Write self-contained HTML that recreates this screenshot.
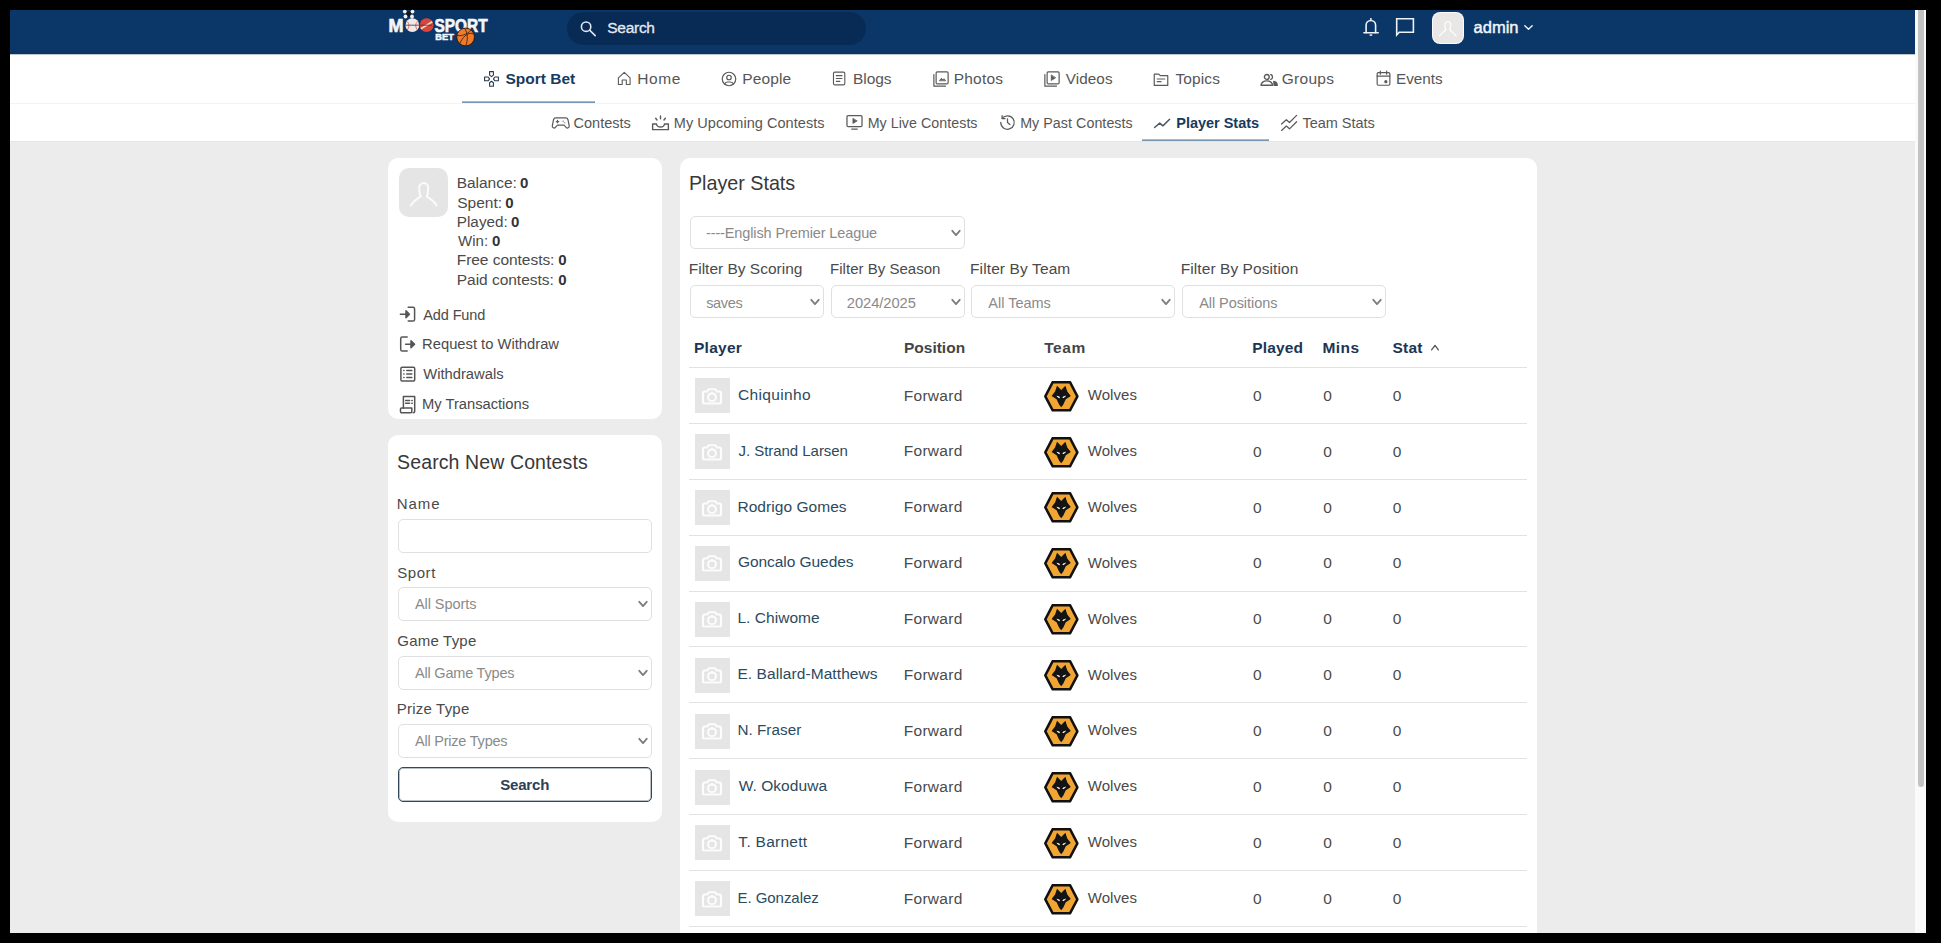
<!DOCTYPE html>
<html><head><meta charset="utf-8"><title>Player Stats</title><style>
html,body{margin:0;padding:0;background:#000;width:1941px;height:943px;overflow:hidden}
body{position:relative;font-family:"Liberation Sans",sans-serif}
.t{position:absolute;white-space:nowrap;line-height:0;font-family:"Liberation Sans",sans-serif}
svg{display:block}
</style></head><body>
<div style="position:absolute;left:10px;top:10px;width:1905px;height:923px;background:#ececec"></div>
<div style="position:absolute;left:1915px;top:10px;width:11px;height:923px;background:#fafafa"></div>
<div style="position:absolute;left:1918px;top:10px;width:6px;height:777px;background:#c3c3c3;border-radius:0 0 3px 3px"></div>
<div style="position:absolute;left:10px;top:10px;width:1905px;height:44px;background:#0b3768"></div>
<div style="position:absolute;left:10px;top:52px;width:1905px;height:1px;background:#0d3360"></div>
<div style="position:absolute;left:10px;top:53px;width:1905px;height:1px;background:#17324f"></div>
<div style="position:absolute;left:567px;top:12px;width:299px;height:33px;background:#082b56;border-radius:17px"></div>
<svg style="position:absolute;left:575px;top:15px" width="30" height="25" viewBox="0 0 30 25" fill="none" stroke="#dde6f0" stroke-width="1.6" stroke-linecap="round"><circle cx="11.1" cy="11.7" r="4.7"/><path d="M14.6 15.2L20.2 20.6"/></svg>
<div class="t" style="left:607.29px;top:28px;font-size:15.5px;color:#e4eaf0;letter-spacing:-0.28px;-webkit-text-stroke:0.3px #e4eaf0;">Search</div>
<svg style="position:absolute;left:1358px;top:14px" width="62" height="26" viewBox="0 0 62 26" fill="none" stroke="#eef2f7" stroke-width="1.6" stroke-linecap="round" stroke-linejoin="round">
<circle cx="12.9" cy="4.9" r="1" fill="#eef2f7" stroke="none"/><path d="M8.1 18.6V11.2a4.75 4.75 0 0 1 9.5 0V18.6"/><path d="M5.9 18.8H20.2"/><rect x="11.6" y="20.3" width="2.6" height="1.5" fill="#eef2f7" stroke="none"/>
<path d="M38.7 4.8H55.4V18.2H41.2L38.7 21V4.8Z" stroke-linecap="butt" stroke-linejoin="miter"/></svg>
<div style="position:absolute;left:1432px;top:12px;width:32px;height:32px;background:#fbfbfb;border-radius:8px"></div>
<div style="position:absolute;left:1433px;top:13px;width:30px;height:30px;background:#e8e7e5;border-radius:7px"></div>
<svg style="position:absolute;left:1432px;top:12px" width="32" height="32" viewBox="0 0 50 50" fill="none" stroke="#fbfbfb" stroke-width="2.2" stroke-linecap="round" stroke-linejoin="round"><path d="M21.7 28.4C20.7 26.6 20.2 24.6 20.2 19.6A4.5 4.5 0 0 1 29.2 19.6C29.2 24.6 28.7 26.6 27.7 28.4C31.2 30.6 34.8 33 37.6 37.4M21.7 28.4C18.2 30.6 14.6 33 11.8 37.4"/></svg>
<div class="t" style="left:1473.61px;top:27px;font-size:16.5px;color:#f2f5f8;letter-spacing:-0.024px;-webkit-text-stroke:0.45px #f2f5f8;">admin</div>
<svg style="position:absolute;left:1523px;top:22px" width="11" height="11" viewBox="0 0 12 12" fill="none" stroke="#f2f5f8" stroke-width="1.5" stroke-linecap="round" stroke-linejoin="round"><path d="M2 4l4 4l4 -4"/></svg>
<div style="position:absolute;left:10px;top:54px;width:1905px;height:87px;background:#fff"></div>
<div style="position:absolute;left:10px;top:54px;width:1905px;height:1px;background:#bcc6cf"></div>
<div style="position:absolute;left:10px;top:103px;width:1905px;height:1px;background:#f3f3f3"></div>
<div style="position:absolute;left:10px;top:141px;width:1905px;height:1px;background:#e5e5e5"></div>
<div style="position:absolute;left:462px;top:101px;width:133px;height:1px;background:#a6bacb"></div>
<div style="position:absolute;left:462px;top:102px;width:133px;height:1px;background:#7896b0"></div>
<div style="position:absolute;left:1142px;top:139px;width:127px;height:1px;background:#a6bacb"></div>
<div style="position:absolute;left:1142px;top:140px;width:127px;height:1px;background:#7896b0"></div>
<div class="t" style="left:505.54px;top:79px;font-size:15.5px;color:#173a60;font-weight:bold;">Sport Bet</div>
<div class="t" style="left:637.23px;top:79px;font-size:15.5px;color:#565656;letter-spacing:0.566px;">Home</div>
<div class="t" style="left:742.23px;top:79px;font-size:15.5px;color:#565656;letter-spacing:0.117px;">People</div>
<div class="t" style="left:853.03px;top:79px;font-size:15.5px;color:#565656;letter-spacing:-0.063px;">Blogs</div>
<div class="t" style="left:953.63px;top:79px;font-size:15.5px;color:#565656;letter-spacing:0.232px;">Photos</div>
<div class="t" style="left:1065.84px;top:79px;font-size:15.25px;color:#565656;letter-spacing:0.07px;">Videos</div>
<div class="t" style="left:1175.46px;top:79px;font-size:15.5px;color:#565656;letter-spacing:0.114px;">Topics</div>
<div class="t" style="left:1281.72px;top:79px;font-size:15.5px;color:#565656;letter-spacing:0.299px;">Groups</div>
<div class="t" style="left:1396.05px;top:79px;font-size:15.25px;color:#565656;letter-spacing:-0.027px;">Events</div>
<svg style="position:absolute;left:484px;top:71px" width="16" height="16" viewBox="0 0 16 16" fill="none" stroke="#26394d" stroke-width="1.1" stroke-linejoin="round"><path d="M5.6 0.6h3.8v3.5l-1.9 1.5l-1.9-1.5z"/><path d="M5.6 15.2h3.8v-3.5l-1.9-1.5l-1.9 1.5z"/><path d="M0.6 6v3.8h3.5l1.5-1.9l-1.5-1.9z"/><path d="M14.4 6v3.8h-3.5l-1.5-1.9l1.5-1.9z"/></svg>
<svg style="position:absolute;left:616px;top:69.5px" width="16.5" height="16.5" viewBox="0 0 24 24" fill="none" stroke="#5a5a5a" stroke-width="1.6" stroke-linecap="round" stroke-linejoin="round"><path d="M3.5 11.5L12 3.5l8.5 8v9.5h-5.5v-6.5h-6v6.5H3.5z"/></svg>
<svg style="position:absolute;left:720px;top:70px" width="18" height="18" viewBox="0 0 24 24" fill="none" stroke="#5a5a5a" stroke-width="1.6" stroke-linecap="round" stroke-linejoin="round"><circle cx="12" cy="12" r="9"/><circle cx="12" cy="10" r="3"/><path d="M6.168 18.849a4 4 0 0 1 3.832 -2.849h4a4 4 0 0 1 3.834 2.855"/></svg>
<svg style="position:absolute;left:831px;top:70px" width="17" height="17" viewBox="0 0 24 24" fill="none" stroke="#5a5a5a" stroke-width="1.6" stroke-linecap="round" stroke-linejoin="round"><rect x="3.5" y="3" width="16" height="18" rx="2"/><path d="M7.5 8h8M7.5 12h8M7.5 16h5"/></svg>
<svg style="position:absolute;left:931.7px;top:69.5px" width="18" height="18" viewBox="0 0 24 24" fill="none" stroke="#5a5a5a" stroke-width="1.6" stroke-linecap="round" stroke-linejoin="round"><rect x="5.5" y="2.5" width="16" height="16" rx="1.5"/><path d="M2.5 6v15.5h15.5"/><path d="M10 14l2.5-3l2 2l1.5-1.5l2 2.5z" fill="#5a5a5a" stroke-width="1"/></svg>
<svg style="position:absolute;left:1042.7px;top:69.5px" width="18" height="18" viewBox="0 0 24 24" fill="none" stroke="#5a5a5a" stroke-width="1.6" stroke-linecap="round" stroke-linejoin="round"><rect x="5.5" y="2.5" width="16" height="16" rx="1.5"/><path d="M2.5 6v15.5h15.5"/><path d="M11 7v7l5.5-3.5z" fill="#5a5a5a" stroke-width="1"/></svg>
<svg style="position:absolute;left:1151.5px;top:69.5px" width="18" height="18" viewBox="0 0 24 24" fill="none" stroke="#5a5a5a" stroke-width="1.6" stroke-linecap="round" stroke-linejoin="round"><path d="M3 5.5h6l2 2h10v13H3z"/><path d="M7 12h10M7 15.5h5"/></svg>
<svg style="position:absolute;left:1259.5px;top:72.5px" width="18" height="14" viewBox="0 0 18 14" fill="none" stroke="#5a5a5a" stroke-width="1.35" stroke-linecap="round" stroke-linejoin="round"><circle cx="6.8" cy="3.9" r="2.4"/><path d="M1 12.2a5.8 4.4 0 0 1 11.6 0z"/><path d="M10.8 1.5a2.6 2.6 0 0 1 0 4.9"/><path d="M13.8 8.4a4 4 0 0 1 3.4 3.6v0.4h-3z" fill="#5a5a5a"/></svg>
<svg style="position:absolute;left:1373.5px;top:69px" width="19" height="19" viewBox="0 0 24 24" fill="none" stroke="#5a5a5a" stroke-width="1.5" stroke-linecap="round" stroke-linejoin="round"><rect x="4" y="4.5" width="16" height="16" rx="1.5"/><path d="M8 2.5v4M16 2.5v4M4 9h16"/><circle cx="15" cy="16" r="1.3" fill="#5a5a5a"/></svg>
<div class="t" style="left:573.57px;top:123px;font-size:14.5px;color:#565656;">Contests</div>
<div class="t" style="left:673.81px;top:123px;font-size:14.5px;color:#565656;letter-spacing:0.044px;">My Upcoming Contests</div>
<div class="t" style="left:867.63px;top:123px;font-size:14.25px;color:#565656;letter-spacing:0.039px;">My Live Contests</div>
<div class="t" style="left:1020.13px;top:123px;font-size:14.25px;color:#565656;letter-spacing:0.061px;">My Past Contests</div>
<div class="t" style="left:1176.34px;top:123px;font-size:14.5px;color:#173a60;font-weight:bold;letter-spacing:-0.026px;">Player Stats</div>
<div class="t" style="left:1302.48px;top:123px;font-size:14.5px;color:#565656;letter-spacing:-0.021px;">Team Stats</div>
<svg style="position:absolute;left:551px;top:112.5px" width="19.5" height="19.5" viewBox="0 0 24 24" fill="none" stroke="#5a5a5a" stroke-width="1.5" stroke-linecap="round" stroke-linejoin="round"><path d="M12 5h3.5a5 5 0 0 1 0 10h-5.5l-4.015 4.227a2.3 2.3 0 0 1 -3.923 -2.035l1.634 -6.542a5 5 0 0 1 4.804 -5.65h3.5z" style="display:none"/><path d="M6 6h12a3 3 0 0 1 2.9 2.3l1.5 7.5a2.2 2.2 0 0 1-3.8 1.9L16 15H8l-2.6 2.7a2.2 2.2 0 0 1-3.8-1.9l1.5-7.5A3 3 0 0 1 6 6z"/><path d="M6.5 10.5h3M8 9v3M15 10h.01M17 12h.01"/></svg>
<svg style="position:absolute;left:650px;top:113px" width="21" height="21" viewBox="0 0 24 24" fill="none" stroke="#5a5a5a" stroke-width="1.6" stroke-linecap="round" stroke-linejoin="round"><path d="M3 12.5h4.5a4.5 3.5 0 0 0 9 0H21v6.5H3z"/><path d="M12 3.5v3M6.5 6l1.5 2M17.5 6l-1.5 2"/></svg>
<svg style="position:absolute;left:845px;top:112px" width="19" height="19" viewBox="0 0 24 24" fill="none" stroke="#5a5a5a" stroke-width="1.6" stroke-linecap="round" stroke-linejoin="round"><rect x="2.5" y="4.5" width="19" height="14" rx="1.5"/><path d="M8.5 21.5h7"/><path d="M10 8.5v6l5-3z" fill="#5a5a5a" stroke-width="1"/></svg>
<svg style="position:absolute;left:998px;top:113px" width="19" height="19" viewBox="0 0 24 24" fill="none" stroke="#5a5a5a" stroke-width="1.6" stroke-linecap="round" stroke-linejoin="round"><path d="M12 7.5v4.5l3 2.5"/><path d="M5.3 6.8A8.5 8.5 0 1 1 3.5 12"/><path d="M5.2 3.2v3.8h3.8"/></svg>
<svg style="position:absolute;left:1153px;top:114px" width="19" height="19" viewBox="0 0 24 24" fill="none" stroke="#4b5563" stroke-width="1.8" stroke-linecap="round" stroke-linejoin="round"><path d="M2 17l6.5-5.5l4 3.5L21 6.5"/></svg>
<svg style="position:absolute;left:1280px;top:113px" width="19" height="19" viewBox="0 0 24 24" fill="none" stroke="#5a5a5a" stroke-width="1.6" stroke-linecap="round" stroke-linejoin="round"><path d="M2 14l6-5.5l4 3.5L21 3"/><path d="M2 22l6-5.5l4 3.5L21 11"/></svg>
<div style="position:absolute;left:388px;top:157.5px;width:274px;height:261.5px;background:#fff;border-radius:10px"></div>
<div style="position:absolute;left:398.5px;top:167.5px;width:49.5px;height:49.5px;background:#e5e5e5;border-radius:10px"></div>
<svg style="position:absolute;left:398.5px;top:167.5px" width="50" height="50" viewBox="0 0 50 50" fill="none" stroke="#fbfbfb" stroke-width="2" stroke-linecap="round" stroke-linejoin="round"><path d="M21.7 28.4C20.7 26.6 20.2 24.6 20.2 19.6A4.5 4.5 0 0 1 29.2 19.6C29.2 24.6 28.7 26.6 27.7 28.4C31.2 30.6 34.8 33 37.6 37.4M21.7 28.4C18.2 30.6 14.6 33 11.8 37.4"/></svg>
<div class="t" style="left:456.73px;top:183px;font-size:15.5px;color:#4a4a4a;letter-spacing:-0.033px;">Balance:</div>
<div class="t" style="left:520.00px;top:183px;font-size:15px;color:#333;font-weight:bold;">0</div>
<div class="t" style="left:457.29px;top:203px;font-size:15.5px;color:#4a4a4a;">Spent:</div>
<div class="t" style="left:505.20px;top:203px;font-size:15px;color:#333;font-weight:bold;">0</div>
<div class="t" style="left:456.75px;top:222px;font-size:15.25px;color:#4a4a4a;letter-spacing:0.03px;">Played:</div>
<div class="t" style="left:510.90px;top:222px;font-size:15px;color:#333;font-weight:bold;">0</div>
<div class="t" style="left:457.94px;top:241px;font-size:15.0px;color:#4a4a4a;letter-spacing:0.047px;">Win:</div>
<div class="t" style="left:492.00px;top:241px;font-size:15px;color:#333;font-weight:bold;">0</div>
<div class="t" style="left:456.73px;top:260px;font-size:15.5px;color:#4a4a4a;letter-spacing:-0.039px;">Free contests:</div>
<div class="t" style="left:558.30px;top:260px;font-size:15px;color:#333;font-weight:bold;">0</div>
<div class="t" style="left:456.73px;top:280px;font-size:15.5px;color:#4a4a4a;letter-spacing:-0.021px;">Paid contests:</div>
<div class="t" style="left:558.30px;top:280px;font-size:15px;color:#333;font-weight:bold;">0</div>
<div class="t" style="left:423.27px;top:315px;font-size:14.5px;color:#4a4a4a;letter-spacing:-0.116px;">Add Fund</div>
<div class="t" style="left:422.09px;top:344px;font-size:14.75px;color:#4a4a4a;">Request to Withdraw</div>
<div class="t" style="left:423.24px;top:374px;font-size:14.75px;color:#4a4a4a;">Withdrawals</div>
<div class="t" style="left:422.09px;top:404px;font-size:14.75px;color:#4a4a4a;letter-spacing:-0.031px;">My Transactions</div>
<svg style="position:absolute;left:396px;top:302px" width="24" height="24" viewBox="0 0 24 24" fill="none" stroke="#555" stroke-width="1.5" stroke-linecap="round" stroke-linejoin="round"><path d="M4.4 12.2H10.5"/><path d="M10 8.7L13.4 12.2L10 15.7Z" fill="#555"/><path d="M12.2 5.3H17a1.6 1.6 0 0 1 1.6 1.6V17.5a1.6 1.6 0 0 1-1.6 1.6H12.2"/></svg>
<svg style="position:absolute;left:396px;top:332px" width="24" height="24" viewBox="0 0 24 24" fill="none" stroke="#555" stroke-width="1.5" stroke-linecap="round" stroke-linejoin="round"><path d="M11.2 5.1H6.3a1.6 1.6 0 0 0-1.6 1.6V17.4a1.6 1.6 0 0 0 1.6 1.6H11.2"/><path d="M9.6 12.2H15.5"/><path d="M15 8.7L18.6 12.2L15 15.7Z" fill="#555"/></svg>
<svg style="position:absolute;left:396px;top:362px" width="24" height="24" viewBox="0 0 24 24" fill="none" stroke="#555" stroke-width="1.5" stroke-linecap="round" stroke-linejoin="round"><rect x="4.9" y="5.2" width="13.8" height="13.7" rx="1.2"/><path d="M10.8 8.6h5M10.8 12h5M10.8 15.4h5M7.8 8.6h.2M7.8 12h.2M7.8 15.4h.2"/></svg>
<svg style="position:absolute;left:396px;top:392px" width="24" height="24" viewBox="0 0 24 24" fill="none" stroke="#555" stroke-width="1.5" stroke-linecap="round" stroke-linejoin="round"><path d="M7.4 16.2V4.6h11.3v14.6a1.5 1.5 0 0 1-1.5 1.5"/><path d="M4.5 17.1a1 1 0 0 1 1-1h10.3v3.6a1 1 0 0 1-1 1H5.5a1 1 0 0 1-1-1z"/><path d="M9.6 8.4h4M9.6 11.3h4M15.8 8.4h.4M15.8 11.3h.4"/></svg>
<div style="position:absolute;left:388px;top:435px;width:274px;height:387px;background:#fff;border-radius:10px"></div>
<div class="t" style="left:397.10px;top:462px;font-size:19.5px;color:#383838;letter-spacing:0.113px;">Search New Contests</div>
<div class="t" style="left:396.77px;top:504px;font-size:15.0px;color:#4a4a4a;letter-spacing:0.957px;">Name</div>
<div class="t" style="left:397.31px;top:573px;font-size:15.0px;color:#4a4a4a;letter-spacing:0.54px;">Sport</div>
<div class="t" style="left:397.25px;top:641px;font-size:15.0px;color:#4a4a4a;letter-spacing:0.22px;">Game Type</div>
<div class="t" style="left:396.77px;top:709px;font-size:15.0px;color:#4a4a4a;letter-spacing:0.211px;">Prize Type</div>
<div style="position:absolute;left:398px;top:519px;width:254px;height:34px;border:1px solid #e0e0e0;border-radius:5px;box-sizing:border-box;background:#fff"></div>
<div style="position:absolute;left:398px;top:587px;width:254px;height:34px;border:1px solid #e0e0e0;border-radius:5px;box-sizing:border-box;background:#fff"></div>
<div class="t" style="left:414.97px;top:604px;font-size:14.5px;color:#8a8a8a;letter-spacing:-0.068px;">All Sports</div>
<svg style="position:absolute;left:638.0px;top:599px" width="10" height="10" viewBox="0 0 10 10" fill="none" stroke="#7d7d7d" stroke-width="1.8" stroke-linecap="round" stroke-linejoin="round"><path d="M1.3 2.8L5 7.1L8.7 2.8"/></svg>
<div style="position:absolute;left:398px;top:656px;width:254px;height:34px;border:1px solid #e0e0e0;border-radius:5px;box-sizing:border-box;background:#fff"></div>
<div class="t" style="left:414.97px;top:673px;font-size:14.5px;color:#8a8a8a;letter-spacing:-0.195px;">All Game Types</div>
<svg style="position:absolute;left:638.0px;top:668px" width="10" height="10" viewBox="0 0 10 10" fill="none" stroke="#7d7d7d" stroke-width="1.8" stroke-linecap="round" stroke-linejoin="round"><path d="M1.3 2.8L5 7.1L8.7 2.8"/></svg>
<div style="position:absolute;left:398px;top:724px;width:254px;height:34px;border:1px solid #e0e0e0;border-radius:5px;box-sizing:border-box;background:#fff"></div>
<div class="t" style="left:414.97px;top:741px;font-size:14.5px;color:#8a8a8a;letter-spacing:-0.214px;">All Prize Types</div>
<svg style="position:absolute;left:638.0px;top:736px" width="10" height="10" viewBox="0 0 10 10" fill="none" stroke="#7d7d7d" stroke-width="1.8" stroke-linecap="round" stroke-linejoin="round"><path d="M1.3 2.8L5 7.1L8.7 2.8"/></svg>
<div style="position:absolute;left:398px;top:767px;width:254px;height:35px;border:1px solid #34475a;border-radius:5px;box-sizing:border-box;background:#fff;box-shadow:inset 0 0 0 1px rgba(52,71,90,0.35)"></div>
<div class="t" style="left:500.15px;top:785px;font-size:15.0px;color:#2b4056;font-weight:bold;letter-spacing:-0.172px;">Search</div>
<div style="position:absolute;left:680px;top:157.5px;width:857px;height:775.5px;background:#fff;border-radius:10px 10px 0 0"></div>
<div class="t" style="left:688.98px;top:183px;font-size:19.75px;color:#383838;letter-spacing:-0.024px;">Player Stats</div>
<div style="position:absolute;left:690px;top:216px;width:275px;height:33px;border:1px solid #e0e0e0;border-radius:5px;box-sizing:border-box;background:#fff"></div>
<div class="t" style="left:705.96px;top:233px;font-size:14.5px;color:#8a8a8a;letter-spacing:-0.115px;">----English Premier League</div>
<svg style="position:absolute;left:951.0px;top:228px" width="10" height="10" viewBox="0 0 10 10" fill="none" stroke="#7d7d7d" stroke-width="1.8" stroke-linecap="round" stroke-linejoin="round"><path d="M1.3 2.8L5 7.1L8.7 2.8"/></svg>
<div class="t" style="left:688.73px;top:269px;font-size:15.5px;color:#4a4a4a;">Filter By Scoring</div>
<div class="t" style="left:830.07px;top:269px;font-size:15.0px;color:#4a4a4a;letter-spacing:0.023px;">Filter By Season</div>
<div class="t" style="left:970.03px;top:269px;font-size:15.5px;color:#4a4a4a;letter-spacing:0.115px;">Filter By Team</div>
<div class="t" style="left:1180.73px;top:269px;font-size:15.5px;color:#4a4a4a;letter-spacing:0.075px;">Filter By Position</div>
<div style="position:absolute;left:690px;top:285px;width:134px;height:33px;border:1px solid #e0e0e0;border-radius:5px;box-sizing:border-box;background:#fff"></div>
<div class="t" style="left:706.19px;top:303px;font-size:14.5px;color:#8a8a8a;letter-spacing:-0.336px;">saves</div>
<svg style="position:absolute;left:810.0px;top:297px" width="10" height="10" viewBox="0 0 10 10" fill="none" stroke="#7d7d7d" stroke-width="1.8" stroke-linecap="round" stroke-linejoin="round"><path d="M1.3 2.8L5 7.1L8.7 2.8"/></svg>
<div style="position:absolute;left:831px;top:285px;width:134px;height:33px;border:1px solid #e0e0e0;border-radius:5px;box-sizing:border-box;background:#fff"></div>
<div class="t" style="left:846.76px;top:303px;font-size:14.75px;color:#8a8a8a;letter-spacing:-0.069px;">2024/2025</div>
<svg style="position:absolute;left:951.0px;top:297px" width="10" height="10" viewBox="0 0 10 10" fill="none" stroke="#7d7d7d" stroke-width="1.8" stroke-linecap="round" stroke-linejoin="round"><path d="M1.3 2.8L5 7.1L8.7 2.8"/></svg>
<div style="position:absolute;left:971px;top:285px;width:204px;height:33px;border:1px solid #e0e0e0;border-radius:5px;box-sizing:border-box;background:#fff"></div>
<div class="t" style="left:988.27px;top:303px;font-size:14.5px;color:#8a8a8a;">All Teams</div>
<svg style="position:absolute;left:1161.0px;top:297px" width="10" height="10" viewBox="0 0 10 10" fill="none" stroke="#7d7d7d" stroke-width="1.8" stroke-linecap="round" stroke-linejoin="round"><path d="M1.3 2.8L5 7.1L8.7 2.8"/></svg>
<div style="position:absolute;left:1182px;top:285px;width:204px;height:33px;border:1px solid #e0e0e0;border-radius:5px;box-sizing:border-box;background:#fff"></div>
<div class="t" style="left:1199.17px;top:303px;font-size:14.5px;color:#8a8a8a;letter-spacing:-0.06px;">All Positions</div>
<svg style="position:absolute;left:1372.0px;top:297px" width="10" height="10" viewBox="0 0 10 10" fill="none" stroke="#7d7d7d" stroke-width="1.8" stroke-linecap="round" stroke-linejoin="round"><path d="M1.3 2.8L5 7.1L8.7 2.8"/></svg>
<div class="t" style="left:693.98px;top:348px;font-size:15.5px;color:#1b3654;font-weight:bold;letter-spacing:0.262px;">Player</div>
<div class="t" style="left:903.98px;top:348px;font-size:15.5px;color:#454545;font-weight:bold;">Position</div>
<div class="t" style="left:1044.21px;top:348px;font-size:15.5px;color:#454545;font-weight:bold;letter-spacing:0.569px;">Team</div>
<div class="t" style="left:1252.28px;top:348px;font-size:15.5px;color:#1b3654;font-weight:bold;letter-spacing:0.149px;">Played</div>
<div class="t" style="left:1322.48px;top:348px;font-size:15.5px;color:#1b3654;font-weight:bold;letter-spacing:0.411px;">Mins</div>
<div class="t" style="left:1392.54px;top:348px;font-size:15.5px;color:#1b3654;font-weight:bold;letter-spacing:0.219px;">Stat</div>
<svg style="position:absolute;left:1429.5px;top:343px" width="10" height="10" viewBox="0 0 10 10" fill="none" stroke="#555" stroke-width="1.3" stroke-linecap="round" stroke-linejoin="round"><path d="M1.6 6.9l3.4-4.5l3.4 4.5"/></svg>
<div style="position:absolute;left:689px;top:367px;width:838px;height:1px;background:#e2e2e2"></div>
<div style="position:absolute;left:694.5px;top:378.3px;width:35px;height:35px;background:#e5e5e5"></div>
<svg style="position:absolute;left:700px;top:384.7px" width="24" height="22" viewBox="0 0 24 22" fill="none" stroke="#fcfcfc" stroke-width="2.1" stroke-linejoin="round"><path d="M4.5 6.5h2.5l1.8-2.3h6.4l1.8 2.3h2.5a1.5 1.5 0 0 1 1.5 1.5v9a1.5 1.5 0 0 1-1.5 1.5h-15a1.5 1.5 0 0 1-1.5-1.5v-9a1.5 1.5 0 0 1 1.5-1.5z"/><circle cx="12" cy="12.3" r="3.9"/></svg>
<div class="t" style="left:737.93px;top:395px;font-size:15.5px;color:#2b4a60;letter-spacing:0.364px;">Chiquinho</div>
<div class="t" style="left:903.73px;top:396px;font-size:15.5px;color:#4a4a4a;letter-spacing:0.285px;">Forward</div>
<svg style="position:absolute;left:1044px;top:380.6px" width="35" height="31" viewBox="0 0 35 31">
<path d="M8.7 1.2H26L33.4 15.3L26 29.3H8.7L1.3 15.3Z" fill="#f1a532" stroke="#111" stroke-width="2.5" stroke-linejoin="round"/>
<path d="M13 4.8L17.2 8.9L21.4 4.8L23.3 10.5L26.8 15L21.8 18.2L19.2 23.8L17.2 26.2L15.2 23.8L12.6 18.2L7.6 15L11.1 10.5Z" fill="#141414"/>
<path d="M12.9 15.2l2.6 .8l-.2 .9z M21.5 15.2l-2.6 .8l.2 .9z" fill="#fff" stroke="#fff" stroke-width=".7"/>
</svg>
<div class="t" style="left:1087.74px;top:395px;font-size:15.0px;color:#4a4a4a;letter-spacing:0.06px;">Wolves</div>
<div class="t" style="left:1253.01px;top:396px;font-size:15.5px;color:#4a4a4a;">0</div>
<div class="t" style="left:1323.21px;top:396px;font-size:15.5px;color:#4a4a4a;">0</div>
<div class="t" style="left:1392.71px;top:396px;font-size:15.5px;color:#4a4a4a;">0</div>
<div style="position:absolute;left:689px;top:422.9px;width:838px;height:1.0px;background:#e2e2e2"></div>
<div style="position:absolute;left:694.5px;top:434.2px;width:35px;height:35px;background:#e5e5e5"></div>
<svg style="position:absolute;left:700px;top:440.6px" width="24" height="22" viewBox="0 0 24 22" fill="none" stroke="#fcfcfc" stroke-width="2.1" stroke-linejoin="round"><path d="M4.5 6.5h2.5l1.8-2.3h6.4l1.8 2.3h2.5a1.5 1.5 0 0 1 1.5 1.5v9a1.5 1.5 0 0 1-1.5 1.5h-15a1.5 1.5 0 0 1-1.5-1.5v-9a1.5 1.5 0 0 1 1.5-1.5z"/><circle cx="12" cy="12.3" r="3.9"/></svg>
<div class="t" style="left:738.46px;top:451px;font-size:15.0px;color:#2b4a60;letter-spacing:-0.038px;">J. Strand Larsen</div>
<div class="t" style="left:903.73px;top:451px;font-size:15.5px;color:#4a4a4a;letter-spacing:0.285px;">Forward</div>
<svg style="position:absolute;left:1044px;top:436.5px" width="35" height="31" viewBox="0 0 35 31">
<path d="M8.7 1.2H26L33.4 15.3L26 29.3H8.7L1.3 15.3Z" fill="#f1a532" stroke="#111" stroke-width="2.5" stroke-linejoin="round"/>
<path d="M13 4.8L17.2 8.9L21.4 4.8L23.3 10.5L26.8 15L21.8 18.2L19.2 23.8L17.2 26.2L15.2 23.8L12.6 18.2L7.6 15L11.1 10.5Z" fill="#141414"/>
<path d="M12.9 15.2l2.6 .8l-.2 .9z M21.5 15.2l-2.6 .8l.2 .9z" fill="#fff" stroke="#fff" stroke-width=".7"/>
</svg>
<div class="t" style="left:1087.74px;top:451px;font-size:15.0px;color:#4a4a4a;letter-spacing:0.06px;">Wolves</div>
<div class="t" style="left:1253.01px;top:452px;font-size:15.5px;color:#4a4a4a;">0</div>
<div class="t" style="left:1323.21px;top:452px;font-size:15.5px;color:#4a4a4a;">0</div>
<div class="t" style="left:1392.71px;top:452px;font-size:15.5px;color:#4a4a4a;">0</div>
<div style="position:absolute;left:689px;top:478.8px;width:838px;height:1.0px;background:#e2e2e2"></div>
<div style="position:absolute;left:694.5px;top:490.1px;width:35px;height:35px;background:#e5e5e5"></div>
<svg style="position:absolute;left:700px;top:496.5px" width="24" height="22" viewBox="0 0 24 22" fill="none" stroke="#fcfcfc" stroke-width="2.1" stroke-linejoin="round"><path d="M4.5 6.5h2.5l1.8-2.3h6.4l1.8 2.3h2.5a1.5 1.5 0 0 1 1.5 1.5v9a1.5 1.5 0 0 1-1.5 1.5h-15a1.5 1.5 0 0 1-1.5-1.5v-9a1.5 1.5 0 0 1 1.5-1.5z"/><circle cx="12" cy="12.3" r="3.9"/></svg>
<div class="t" style="left:737.43px;top:507px;font-size:15.5px;color:#2b4a60;letter-spacing:0.05px;">Rodrigo Gomes</div>
<div class="t" style="left:903.73px;top:507px;font-size:15.5px;color:#4a4a4a;letter-spacing:0.285px;">Forward</div>
<svg style="position:absolute;left:1044px;top:492.4px" width="35" height="31" viewBox="0 0 35 31">
<path d="M8.7 1.2H26L33.4 15.3L26 29.3H8.7L1.3 15.3Z" fill="#f1a532" stroke="#111" stroke-width="2.5" stroke-linejoin="round"/>
<path d="M13 4.8L17.2 8.9L21.4 4.8L23.3 10.5L26.8 15L21.8 18.2L19.2 23.8L17.2 26.2L15.2 23.8L12.6 18.2L7.6 15L11.1 10.5Z" fill="#141414"/>
<path d="M12.9 15.2l2.6 .8l-.2 .9z M21.5 15.2l-2.6 .8l.2 .9z" fill="#fff" stroke="#fff" stroke-width=".7"/>
</svg>
<div class="t" style="left:1087.74px;top:507px;font-size:15.0px;color:#4a4a4a;letter-spacing:0.06px;">Wolves</div>
<div class="t" style="left:1253.01px;top:508px;font-size:15.5px;color:#4a4a4a;">0</div>
<div class="t" style="left:1323.21px;top:508px;font-size:15.5px;color:#4a4a4a;">0</div>
<div class="t" style="left:1392.71px;top:508px;font-size:15.5px;color:#4a4a4a;">0</div>
<div style="position:absolute;left:689px;top:534.6px;width:838px;height:1.0px;background:#e2e2e2"></div>
<div style="position:absolute;left:694.5px;top:545.9px;width:35px;height:35px;background:#e5e5e5"></div>
<svg style="position:absolute;left:700px;top:552.3px" width="24" height="22" viewBox="0 0 24 22" fill="none" stroke="#fcfcfc" stroke-width="2.1" stroke-linejoin="round"><path d="M4.5 6.5h2.5l1.8-2.3h6.4l1.8 2.3h2.5a1.5 1.5 0 0 1 1.5 1.5v9a1.5 1.5 0 0 1-1.5 1.5h-15a1.5 1.5 0 0 1-1.5-1.5v-9a1.5 1.5 0 0 1 1.5-1.5z"/><circle cx="12" cy="12.3" r="3.9"/></svg>
<div class="t" style="left:737.93px;top:562px;font-size:15.5px;color:#2b4a60;letter-spacing:-0.052px;">Goncalo Guedes</div>
<div class="t" style="left:903.73px;top:563px;font-size:15.5px;color:#4a4a4a;letter-spacing:0.285px;">Forward</div>
<svg style="position:absolute;left:1044px;top:548.2px" width="35" height="31" viewBox="0 0 35 31">
<path d="M8.7 1.2H26L33.4 15.3L26 29.3H8.7L1.3 15.3Z" fill="#f1a532" stroke="#111" stroke-width="2.5" stroke-linejoin="round"/>
<path d="M13 4.8L17.2 8.9L21.4 4.8L23.3 10.5L26.8 15L21.8 18.2L19.2 23.8L17.2 26.2L15.2 23.8L12.6 18.2L7.6 15L11.1 10.5Z" fill="#141414"/>
<path d="M12.9 15.2l2.6 .8l-.2 .9z M21.5 15.2l-2.6 .8l.2 .9z" fill="#fff" stroke="#fff" stroke-width=".7"/>
</svg>
<div class="t" style="left:1087.74px;top:563px;font-size:15.0px;color:#4a4a4a;letter-spacing:0.06px;">Wolves</div>
<div class="t" style="left:1253.01px;top:563px;font-size:15.5px;color:#4a4a4a;">0</div>
<div class="t" style="left:1323.21px;top:563px;font-size:15.5px;color:#4a4a4a;">0</div>
<div class="t" style="left:1392.71px;top:563px;font-size:15.5px;color:#4a4a4a;">0</div>
<div style="position:absolute;left:689px;top:590.5px;width:838px;height:1.0px;background:#e2e2e2"></div>
<div style="position:absolute;left:694.5px;top:601.8px;width:35px;height:35px;background:#e5e5e5"></div>
<svg style="position:absolute;left:700px;top:608.2px" width="24" height="22" viewBox="0 0 24 22" fill="none" stroke="#fcfcfc" stroke-width="2.1" stroke-linejoin="round"><path d="M4.5 6.5h2.5l1.8-2.3h6.4l1.8 2.3h2.5a1.5 1.5 0 0 1 1.5 1.5v9a1.5 1.5 0 0 1-1.5 1.5h-15a1.5 1.5 0 0 1-1.5-1.5v-9a1.5 1.5 0 0 1 1.5-1.5z"/><circle cx="12" cy="12.3" r="3.9"/></svg>
<div class="t" style="left:737.43px;top:618px;font-size:15.5px;color:#2b4a60;letter-spacing:0.046px;">L. Chiwome</div>
<div class="t" style="left:903.73px;top:619px;font-size:15.5px;color:#4a4a4a;letter-spacing:0.285px;">Forward</div>
<svg style="position:absolute;left:1044px;top:604.1px" width="35" height="31" viewBox="0 0 35 31">
<path d="M8.7 1.2H26L33.4 15.3L26 29.3H8.7L1.3 15.3Z" fill="#f1a532" stroke="#111" stroke-width="2.5" stroke-linejoin="round"/>
<path d="M13 4.8L17.2 8.9L21.4 4.8L23.3 10.5L26.8 15L21.8 18.2L19.2 23.8L17.2 26.2L15.2 23.8L12.6 18.2L7.6 15L11.1 10.5Z" fill="#141414"/>
<path d="M12.9 15.2l2.6 .8l-.2 .9z M21.5 15.2l-2.6 .8l.2 .9z" fill="#fff" stroke="#fff" stroke-width=".7"/>
</svg>
<div class="t" style="left:1087.74px;top:619px;font-size:15.0px;color:#4a4a4a;letter-spacing:0.06px;">Wolves</div>
<div class="t" style="left:1253.01px;top:619px;font-size:15.5px;color:#4a4a4a;">0</div>
<div class="t" style="left:1323.21px;top:619px;font-size:15.5px;color:#4a4a4a;">0</div>
<div class="t" style="left:1392.71px;top:619px;font-size:15.5px;color:#4a4a4a;">0</div>
<div style="position:absolute;left:689px;top:646.4px;width:838px;height:1.0px;background:#e2e2e2"></div>
<div style="position:absolute;left:694.5px;top:657.7px;width:35px;height:35px;background:#e5e5e5"></div>
<svg style="position:absolute;left:700px;top:664.1px" width="24" height="22" viewBox="0 0 24 22" fill="none" stroke="#fcfcfc" stroke-width="2.1" stroke-linejoin="round"><path d="M4.5 6.5h2.5l1.8-2.3h6.4l1.8 2.3h2.5a1.5 1.5 0 0 1 1.5 1.5v9a1.5 1.5 0 0 1-1.5 1.5h-15a1.5 1.5 0 0 1-1.5-1.5v-9a1.5 1.5 0 0 1 1.5-1.5z"/><circle cx="12" cy="12.3" r="3.9"/></svg>
<div class="t" style="left:737.43px;top:674px;font-size:15.5px;color:#2b4a60;letter-spacing:0.08px;">E. Ballard-Matthews</div>
<div class="t" style="left:903.73px;top:675px;font-size:15.5px;color:#4a4a4a;letter-spacing:0.285px;">Forward</div>
<svg style="position:absolute;left:1044px;top:660.0px" width="35" height="31" viewBox="0 0 35 31">
<path d="M8.7 1.2H26L33.4 15.3L26 29.3H8.7L1.3 15.3Z" fill="#f1a532" stroke="#111" stroke-width="2.5" stroke-linejoin="round"/>
<path d="M13 4.8L17.2 8.9L21.4 4.8L23.3 10.5L26.8 15L21.8 18.2L19.2 23.8L17.2 26.2L15.2 23.8L12.6 18.2L7.6 15L11.1 10.5Z" fill="#141414"/>
<path d="M12.9 15.2l2.6 .8l-.2 .9z M21.5 15.2l-2.6 .8l.2 .9z" fill="#fff" stroke="#fff" stroke-width=".7"/>
</svg>
<div class="t" style="left:1087.74px;top:675px;font-size:15.0px;color:#4a4a4a;letter-spacing:0.06px;">Wolves</div>
<div class="t" style="left:1253.01px;top:675px;font-size:15.5px;color:#4a4a4a;">0</div>
<div class="t" style="left:1323.21px;top:675px;font-size:15.5px;color:#4a4a4a;">0</div>
<div class="t" style="left:1392.71px;top:675px;font-size:15.5px;color:#4a4a4a;">0</div>
<div style="position:absolute;left:689px;top:702.3px;width:838px;height:1.0px;background:#e2e2e2"></div>
<div style="position:absolute;left:694.5px;top:713.6px;width:35px;height:35px;background:#e5e5e5"></div>
<svg style="position:absolute;left:700px;top:720.0px" width="24" height="22" viewBox="0 0 24 22" fill="none" stroke="#fcfcfc" stroke-width="2.1" stroke-linejoin="round"><path d="M4.5 6.5h2.5l1.8-2.3h6.4l1.8 2.3h2.5a1.5 1.5 0 0 1 1.5 1.5v9a1.5 1.5 0 0 1-1.5 1.5h-15a1.5 1.5 0 0 1-1.5-1.5v-9a1.5 1.5 0 0 1 1.5-1.5z"/><circle cx="12" cy="12.3" r="3.9"/></svg>
<div class="t" style="left:737.45px;top:730px;font-size:15.25px;color:#2b4a60;letter-spacing:0.033px;">N. Fraser</div>
<div class="t" style="left:903.73px;top:731px;font-size:15.5px;color:#4a4a4a;letter-spacing:0.285px;">Forward</div>
<svg style="position:absolute;left:1044px;top:715.9px" width="35" height="31" viewBox="0 0 35 31">
<path d="M8.7 1.2H26L33.4 15.3L26 29.3H8.7L1.3 15.3Z" fill="#f1a532" stroke="#111" stroke-width="2.5" stroke-linejoin="round"/>
<path d="M13 4.8L17.2 8.9L21.4 4.8L23.3 10.5L26.8 15L21.8 18.2L19.2 23.8L17.2 26.2L15.2 23.8L12.6 18.2L7.6 15L11.1 10.5Z" fill="#141414"/>
<path d="M12.9 15.2l2.6 .8l-.2 .9z M21.5 15.2l-2.6 .8l.2 .9z" fill="#fff" stroke="#fff" stroke-width=".7"/>
</svg>
<div class="t" style="left:1087.74px;top:730px;font-size:15.0px;color:#4a4a4a;letter-spacing:0.06px;">Wolves</div>
<div class="t" style="left:1253.01px;top:731px;font-size:15.5px;color:#4a4a4a;">0</div>
<div class="t" style="left:1323.21px;top:731px;font-size:15.5px;color:#4a4a4a;">0</div>
<div class="t" style="left:1392.71px;top:731px;font-size:15.5px;color:#4a4a4a;">0</div>
<div style="position:absolute;left:689px;top:758.2px;width:838px;height:1.0px;background:#e2e2e2"></div>
<div style="position:absolute;left:694.5px;top:769.5px;width:35px;height:35px;background:#e5e5e5"></div>
<svg style="position:absolute;left:700px;top:775.9px" width="24" height="22" viewBox="0 0 24 22" fill="none" stroke="#fcfcfc" stroke-width="2.1" stroke-linejoin="round"><path d="M4.5 6.5h2.5l1.8-2.3h6.4l1.8 2.3h2.5a1.5 1.5 0 0 1 1.5 1.5v9a1.5 1.5 0 0 1-1.5 1.5h-15a1.5 1.5 0 0 1-1.5-1.5v-9a1.5 1.5 0 0 1 1.5-1.5z"/><circle cx="12" cy="12.3" r="3.9"/></svg>
<div class="t" style="left:738.64px;top:786px;font-size:15.5px;color:#2b4a60;letter-spacing:0.056px;">W. Okoduwa</div>
<div class="t" style="left:903.73px;top:787px;font-size:15.5px;color:#4a4a4a;letter-spacing:0.285px;">Forward</div>
<svg style="position:absolute;left:1044px;top:771.8px" width="35" height="31" viewBox="0 0 35 31">
<path d="M8.7 1.2H26L33.4 15.3L26 29.3H8.7L1.3 15.3Z" fill="#f1a532" stroke="#111" stroke-width="2.5" stroke-linejoin="round"/>
<path d="M13 4.8L17.2 8.9L21.4 4.8L23.3 10.5L26.8 15L21.8 18.2L19.2 23.8L17.2 26.2L15.2 23.8L12.6 18.2L7.6 15L11.1 10.5Z" fill="#141414"/>
<path d="M12.9 15.2l2.6 .8l-.2 .9z M21.5 15.2l-2.6 .8l.2 .9z" fill="#fff" stroke="#fff" stroke-width=".7"/>
</svg>
<div class="t" style="left:1087.74px;top:786px;font-size:15.0px;color:#4a4a4a;letter-spacing:0.06px;">Wolves</div>
<div class="t" style="left:1253.01px;top:787px;font-size:15.5px;color:#4a4a4a;">0</div>
<div class="t" style="left:1323.21px;top:787px;font-size:15.5px;color:#4a4a4a;">0</div>
<div class="t" style="left:1392.71px;top:787px;font-size:15.5px;color:#4a4a4a;">0</div>
<div style="position:absolute;left:689px;top:814.0px;width:838px;height:1.0px;background:#e2e2e2"></div>
<div style="position:absolute;left:694.5px;top:825.3px;width:35px;height:35px;background:#e5e5e5"></div>
<svg style="position:absolute;left:700px;top:831.7px" width="24" height="22" viewBox="0 0 24 22" fill="none" stroke="#fcfcfc" stroke-width="2.1" stroke-linejoin="round"><path d="M4.5 6.5h2.5l1.8-2.3h6.4l1.8 2.3h2.5a1.5 1.5 0 0 1 1.5 1.5v9a1.5 1.5 0 0 1-1.5 1.5h-15a1.5 1.5 0 0 1-1.5-1.5v-9a1.5 1.5 0 0 1 1.5-1.5z"/><circle cx="12" cy="12.3" r="3.9"/></svg>
<div class="t" style="left:738.36px;top:842px;font-size:15.5px;color:#2b4a60;letter-spacing:0.269px;">T. Barnett</div>
<div class="t" style="left:903.73px;top:843px;font-size:15.5px;color:#4a4a4a;letter-spacing:0.285px;">Forward</div>
<svg style="position:absolute;left:1044px;top:827.6px" width="35" height="31" viewBox="0 0 35 31">
<path d="M8.7 1.2H26L33.4 15.3L26 29.3H8.7L1.3 15.3Z" fill="#f1a532" stroke="#111" stroke-width="2.5" stroke-linejoin="round"/>
<path d="M13 4.8L17.2 8.9L21.4 4.8L23.3 10.5L26.8 15L21.8 18.2L19.2 23.8L17.2 26.2L15.2 23.8L12.6 18.2L7.6 15L11.1 10.5Z" fill="#141414"/>
<path d="M12.9 15.2l2.6 .8l-.2 .9z M21.5 15.2l-2.6 .8l.2 .9z" fill="#fff" stroke="#fff" stroke-width=".7"/>
</svg>
<div class="t" style="left:1087.74px;top:842px;font-size:15.0px;color:#4a4a4a;letter-spacing:0.06px;">Wolves</div>
<div class="t" style="left:1253.01px;top:843px;font-size:15.5px;color:#4a4a4a;">0</div>
<div class="t" style="left:1323.21px;top:843px;font-size:15.5px;color:#4a4a4a;">0</div>
<div class="t" style="left:1392.71px;top:843px;font-size:15.5px;color:#4a4a4a;">0</div>
<div style="position:absolute;left:689px;top:869.9px;width:838px;height:1.0px;background:#e2e2e2"></div>
<div style="position:absolute;left:694.5px;top:881.2px;width:35px;height:35px;background:#e5e5e5"></div>
<svg style="position:absolute;left:700px;top:887.6px" width="24" height="22" viewBox="0 0 24 22" fill="none" stroke="#fcfcfc" stroke-width="2.1" stroke-linejoin="round"><path d="M4.5 6.5h2.5l1.8-2.3h6.4l1.8 2.3h2.5a1.5 1.5 0 0 1 1.5 1.5v9a1.5 1.5 0 0 1-1.5 1.5h-15a1.5 1.5 0 0 1-1.5-1.5v-9a1.5 1.5 0 0 1 1.5-1.5z"/><circle cx="12" cy="12.3" r="3.9"/></svg>
<div class="t" style="left:737.47px;top:898px;font-size:15.0px;color:#2b4a60;letter-spacing:-0.044px;">E. Gonzalez</div>
<div class="t" style="left:903.73px;top:899px;font-size:15.5px;color:#4a4a4a;letter-spacing:0.285px;">Forward</div>
<svg style="position:absolute;left:1044px;top:883.5px" width="35" height="31" viewBox="0 0 35 31">
<path d="M8.7 1.2H26L33.4 15.3L26 29.3H8.7L1.3 15.3Z" fill="#f1a532" stroke="#111" stroke-width="2.5" stroke-linejoin="round"/>
<path d="M13 4.8L17.2 8.9L21.4 4.8L23.3 10.5L26.8 15L21.8 18.2L19.2 23.8L17.2 26.2L15.2 23.8L12.6 18.2L7.6 15L11.1 10.5Z" fill="#141414"/>
<path d="M12.9 15.2l2.6 .8l-.2 .9z M21.5 15.2l-2.6 .8l.2 .9z" fill="#fff" stroke="#fff" stroke-width=".7"/>
</svg>
<div class="t" style="left:1087.74px;top:898px;font-size:15.0px;color:#4a4a4a;letter-spacing:0.06px;">Wolves</div>
<div class="t" style="left:1253.01px;top:899px;font-size:15.5px;color:#4a4a4a;">0</div>
<div class="t" style="left:1323.21px;top:899px;font-size:15.5px;color:#4a4a4a;">0</div>
<div class="t" style="left:1392.71px;top:899px;font-size:15.5px;color:#4a4a4a;">0</div>
<div style="position:absolute;left:689px;top:925.8px;width:838px;height:1.0px;background:#e2e2e2"></div>
<svg style="position:absolute;left:385px;top:8px" width="110" height="42" viewBox="0 0 110 42">
<g fill="#f4f6fa" stroke="#f4f6fa" stroke-width="0.7" font-family="Liberation Sans" font-weight="bold">
<text x="3.4" y="23.8" font-size="18.5" textLength="15" lengthAdjust="spacingAndGlyphs">M</text>
<text x="49.6" y="23.8" font-size="18.5" textLength="53" lengthAdjust="spacingAndGlyphs">SPORT</text>
<text x="50.3" y="32.3" font-size="8.6" textLength="18.5" lengthAdjust="spacingAndGlyphs" stroke-width="0.5">BET</text>
</g>
<circle cx="27.3" cy="17.2" r="6.9" fill="#f3e8e8"/><path d="M22 13.5c2.5 2 2.5 6 0 8.5M32.6 13.5c-2.5 2-2.5 6 0 8.5" stroke="#d86a64" stroke-width="0.9" fill="none"/>
<circle cx="41.6" cy="17.2" r="6.9" fill="#d9443b"/><path d="M35.8 20.8l11.5-7" stroke="#f5d8c8" stroke-width="1.8"/>
<path d="M20 17.2h27" stroke="#3a3a3a" stroke-width="0.8"/>
<circle cx="80.6" cy="29" r="8.9" fill="#ee7a2b" stroke="#2a1408" stroke-width="0.9"/>
<path d="M72.2 27.5c5 1 12-2 15.5-7.5M74.5 36.5c2-6 8-13.5 14-10.5M79.5 20.2c3.5 5 3.5 12 1.2 17.6" stroke="#4a2010" stroke-width="0.9" fill="none"/>
<circle cx="23.7" cy="6" r="2.8" fill="#161616"/><circle cx="19.8" cy="3.6" r="1.9" fill="#f4f4f4"/><circle cx="27.5" cy="3.6" r="1.9" fill="#f4f4f4"/><circle cx="20.5" cy="8.5" r="1.9" fill="#f0f0f0"/><circle cx="27" cy="8.5" r="1.9" fill="#f0f0f0"/>
</svg>
</body></html>
